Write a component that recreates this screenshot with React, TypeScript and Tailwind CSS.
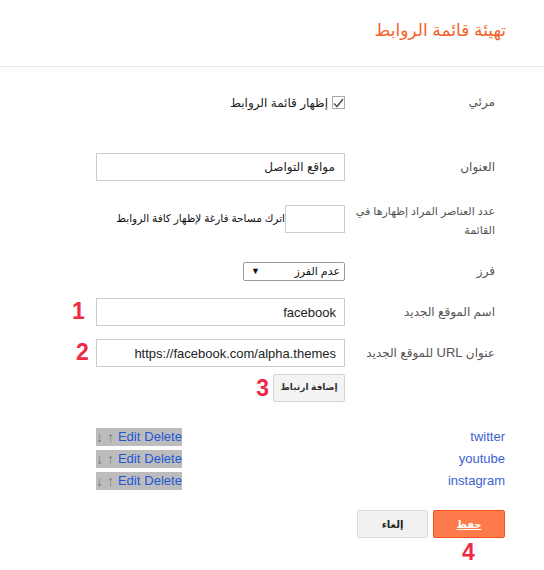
import { useState } from "react";

interface LinkItem {
  name: string;
}

const links: LinkItem[] = [
  { name: "twitter" },
  { name: "youtube" },
  { name: "instagram" },
];

const Marker = ({ n, className }: { n: string; className: string }) => (
  <span
    dir="ltr"
    className={`absolute text-[23px] leading-none font-bold text-[#ee2a47] ${className}`}
  >
    {n}
  </span>
);

const Row = ({
  label,
  children,
  className = "",
}: {
  label: React.ReactNode;
  children: React.ReactNode;
  className?: string;
}) => (
  <div className={`grid grid-cols-[150px_1fr] gap-x-[10px] ${className}`}>
    <div className="pr-[10px] text-[12px] leading-[19px] text-[#555]">{label}</div>
    <div className="relative flex items-center">{children}</div>
  </div>
);

const App = () => {
  const [visible, setVisible] = useState(true);
  const [title, setTitle] = useState("مواقع التواصل");
  const [siteName, setSiteName] = useState("facebook");
  const [siteUrl, setSiteUrl] = useState("https://facebook.com/alpha.themes");

  return (
    <div
      className="w-[544px] h-[570px] bg-white overflow-hidden"
      style={{ fontFamily: '"Liberation Sans", "DejaVu Sans", sans-serif' }}
    >
      {/* header */}
      <div dir="rtl" className="h-[67px] border-b border-[#e8e8e8] pr-[38px] pt-[20px]">
        <h1 className="text-[17px] leading-[22px] text-[#f4622a]">تهيئة قائمة الروابط</h1>
      </div>

      <div dir="rtl" className="pr-[39px] pl-[96px]">
        {/* visible */}
        <Row label="مرئي" className="mt-[26px] items-center">
          <label className="flex items-center gap-[4px] text-[12px] text-[#222] cursor-pointer">
            <span
              onClick={() => setVisible(!visible)}
              className="w-[13px] h-[13px] border border-[#aaa] bg-white flex items-center justify-center"
            >
              {visible && (
                <svg width="11" height="10" viewBox="0 0 11 10">
                  <path d="M1 5.5 L4 8.5 L10 1" fill="none" stroke="#555" strokeWidth="1.6" />
                </svg>
              )}
            </span>
            إظهار قائمة الروابط
          </label>
        </Row>

        {/* title */}
        <Row label="العنوان" className="mt-[41px] items-center">
          <input
            value={title}
            onChange={(e) => setTitle(e.target.value)}
            className="w-full h-[28px] border border-[#ccc] px-[9px] text-[12px] text-[#222] outline-none"
          />
        </Row>

        {/* count */}
        <Row
          label={
            <span className="whitespace-nowrap text-[11px]">
              عدد العناصر المراد إظهارها في
              <br />
              القائمة
            </span>
          }
          className="mt-[21px] items-start"
        >
          <input className="w-[60px] h-[28px] mt-[3px] border border-[#ccc] outline-none shrink-0" />
          <span className="text-[10.5px] text-[#111] mt-[3px] whitespace-nowrap">
            اترك مساحة فارغة لإظهار كافة الروابط
          </span>
        </Row>

        {/* sort */}
        <Row label="فرز" className="mt-[22px] items-center">
          <div className="w-[102px] h-[19px] border border-[#999] rounded-[2px] flex items-center justify-between px-[4px] text-[11px] text-[#111]">
            <span>عدم الفرز</span>
            <span className="text-[9px] pl-[3px]">▼</span>
          </div>
        </Row>

        {/* new site name */}
        <Row label="اسم الموقع الجديد" className="mt-[17px] items-center">
          <input
            value={siteName}
            onChange={(e) => setSiteName(e.target.value)}
            className="w-full h-[28px] border border-[#ccc] px-[8px] text-[13px] text-[#222] outline-none"
          />
          <Marker n="1" className="left-[-24px] top-[2px]" />
        </Row>

        {/* new site url */}
        <Row
          label={
            <span>
              عنوان <span className="text-[13px]">URL</span> للموقع الجديد
            </span>
          }
          className="mt-[13px] items-center"
        >
          <input
            value={siteUrl}
            onChange={(e) => setSiteUrl(e.target.value)}
            className="w-full h-[28px] border border-[#ccc] px-[8px] text-[13px] text-[#222] outline-none"
          />
          <Marker n="2" className="left-[-20px] top-[2px]" />
        </Row>

        {/* add button */}
        <Row label="" className="mt-[7px]">
          <button
            type="button"
            className="w-[72px] h-[28px] border border-[#d4d4d4] rounded-[2px] bg-[#f3f3f3] text-[9px] font-bold text-[#333]"
          >
            إضافة ارتباط
          </button>
          <Marker n="3" className="right-[76px] top-[3px]" />
        </Row>

        {/* links */}
        <div className="mt-[26px] flex flex-col gap-[4px]">
          {links.map((link) => (
            <div key={link.name} className="flex items-center justify-between h-[18px]">
              <a className="text-[13px] text-[#3b63d0] cursor-pointer">{link.name}</a>
              <span dir="ltr" className="bg-[#bcbcbc] h-[18px] flex items-center text-[13px] leading-[18px]">
                <span className="text-[#7a7a7a] text-[14px]">↓ ↑</span>
                <a className="text-[#1e57d8] ml-[4px] cursor-pointer">Edit</a>
                <a className="text-[#1e57d8] ml-[4px] cursor-pointer">Delete</a>
              </span>
            </div>
          ))}
        </div>

        {/* actions */}
        <div className="mt-[20px] flex gap-[5px]">
          <div className="relative">
            <button
              type="button"
              className="w-[72px] h-[28px] rounded-[2px] border border-[#f4511e] bg-[#fd7a4b] text-[10px] font-bold text-white underline"
            >
              حفظ
            </button>
            <Marker n="4" className="left-[29px] top-[31px]" />
          </div>
          <button
            type="button"
            className="w-[71px] h-[28px] rounded-[2px] border border-[#dcdcdc] bg-[#f1f1f1] text-[10px] font-bold text-[#222]"
          >
            إلغاء
          </button>
        </div>
      </div>
    </div>
  );
};

export default App;
